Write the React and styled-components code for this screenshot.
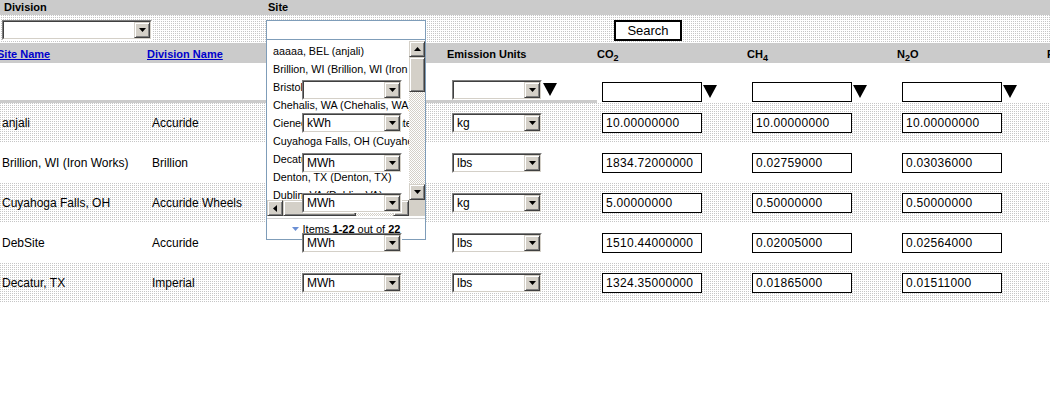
import React from 'react'
import styled, { createGlobalStyle, css } from 'styled-components'

const GlobalStyle = createGlobalStyle`
  html, body {
    margin: 0;
    padding: 0;
    background: #fff;
  }
  body {
    font-family: "Liberation Sans", Arial, sans-serif;
    font-size: 12px;
    color: #000;
    overflow: hidden;
  }
`

const dither = css`
  background-color: #fff;
  background-image: conic-gradient(#c6c6c6 0 25%, #fff 0);
  background-size: 2px 2px;
`

const checker = css`
  background-color: #fff;
  background-image: conic-gradient(#d4d0c8 0 25%, #fff 0 50%, #d4d0c8 0 75%, #fff 0);
  background-size: 2px 2px;
`

const raised = css`
  box-sizing: border-box;
  background-color: #d4d0c8;
  border: 1px solid;
  border-color: #d4d0c8 #404040 #404040 #d4d0c8;
  box-shadow: inset 1px 1px #fff, inset -1px -1px #808080;
`

const Page = styled.div`
  width: 1050px;
  height: 400px;
  overflow: hidden;
  background: #fff;
`

const LabelBar = styled.div`
  display: grid;
  grid-template-columns: 266px 348px 1fr;
  height: 15px;
  background: #cbcbcb;
  font-size: 11px;
  font-weight: bold;
  line-height: 15px;
`

const Label = styled.div`
  padding-left: ${p => p.$indent}px;
`

const ControlBar = styled.div`
  display: grid;
  grid-template-columns: 266px 348px 1fr;
  align-items: start;
  height: 28px;
  padding-top: 5px;
  box-sizing: border-box;
  ${dither}
`

const Slot = styled.div`
  padding-left: ${p => p.$indent || 0}px;
`

const ComboOuter = styled.div`
  position: relative;
  z-index: 3;
  width: ${p => p.$w}px;
  height: 20px;
  box-sizing: border-box;
  border: 1px solid;
  border-color: #808080 #fff #fff #808080;
`

const ComboInner = styled.div`
  display: flex;
  height: 100%;
  box-sizing: border-box;
  border: 1px solid;
  border-color: #404040 #d4d0c8 #d4d0c8 #404040;
  background: #fff;
`

const ComboText = styled.span`
  flex: 1;
  padding-left: 3px;
  font-size: 12px;
  line-height: 16px;
  white-space: nowrap;
  overflow: hidden;
`

const ArrowButton = styled.span`
  ${raised}
  width: 16px;
  height: 16px;
  flex: none;
  display: flex;
  align-items: center;
  justify-content: center;
`

const SearchButton = styled.button`
  width: 68px;
  height: 21px;
  box-sizing: border-box;
  border: 2px solid #000;
  background: #fff;
  padding: 0;
  font-family: "Liberation Sans", Arial, sans-serif;
  font-size: 13px;
  line-height: 17px;
  color: #000;
`

const SiteField = styled.div`
  position: relative;
`

const SiteInput = styled.div`
  width: 160px;
  height: 20px;
  box-sizing: border-box;
  border: 1px solid #7f9db9;
  background: #fff;
`

const Popup = styled.div`
  position: absolute;
  top: 20px;
  left: 0;
  z-index: 2;
  width: 160px;
  height: 200px;
  box-sizing: border-box;
  border: 1px solid #7f9db9;
  border-top: none;
  background: #fff;
  display: flex;
  flex-direction: column;
`

const ListFrame = styled.div`
  display: grid;
  grid-template-columns: 1fr 16px;
  grid-template-rows: 160px 16px;
`

const ItemList = styled.div`
  overflow: hidden;
  padding-top: 2px;
`

const Item = styled.div`
  height: 18px;
  padding-left: 6px;
  font-size: 10.75px;
  line-height: 18px;
  white-space: nowrap;
`

const VScroll = styled.div`
  display: flex;
  flex-direction: column;
  margin-top: 1px;
`

const HScroll = styled.div`
  display: flex;
`

const ScrollButton = styled.span`
  ${raised}
  width: 16px;
  height: 16px;
  flex: none;
  display: flex;
  align-items: center;
  justify-content: center;
`

const Thumb = styled.span`
  ${raised}
  flex: none;
  ${p => (p.$vertical ? `height: ${p.$size}px;` : `width: ${p.$size}px;`)}
`

const Track = styled.span`
  flex: 1;
  ${checker}
`

const Corner = styled.span`
  background: #d4d0c8;
`

const PopupFooter = styled.div`
  flex: 1;
  margin-top: 2px;
  border-top: 1px solid #d0d0d0;
  display: flex;
  align-items: center;
  justify-content: center;
  gap: 4px;
  font-size: 11px;
`

const Table = styled.div`
  margin-left: -3px;
  width: 1200px;
`

const grid = css`
  display: grid;
  grid-template-columns: repeat(8, 150px);
`

const HeaderRow = styled.div`
  ${grid}
  height: 20px;
  background: #cbcbcb;
  font-size: 11px;
  font-weight: bold;
  line-height: 18px;
  padding-top: 2px;
  box-sizing: border-box;
  white-space: nowrap;
`

const HeadLink = styled.a`
  color: #0000cc;
  text-decoration: underline;
  cursor: pointer;
`

const FilterRow = styled.div`
  ${grid}
  height: 40px;
  background: #fff;
`

const FilterCell = styled.div`
  display: flex;
  align-items: flex-end;
  gap: 1px;
  padding-left: 5px;
  box-sizing: border-box;
  ${p =>
    p.$ruled
      ? 'border-bottom: 3px solid #cbcbcb;'
      : 'padding-bottom: 1px;'}
`

const DataRow = styled.div`
  ${grid}
  height: 40px;
  align-items: center;
  ${p => (p.$shaded ? dither : 'background: #fff;')}
`

const Cell = styled.div`
  padding-left: 5px;
  font-size: 12px;
  white-space: nowrap;
`

const GasInput = styled.div`
  width: 100px;
  height: 20px;
  box-sizing: border-box;
  border: 1px solid #000;
  background: #fff;
  padding-left: 3px;
  font-size: 12px;
  line-height: 18px;
  letter-spacing: 0.3px;
`

const SmallArrow = ({ dir = 'down' }) => {
  const pts = {
    down: '0,0 7,0 3.5,4',
    up: '0,4 7,4 3.5,0',
    left: '4,0 4,7 0,3.5'
  }[dir]
  const w = dir === 'left' ? 4 : 7
  const h = dir === 'left' ? 7 : 4
  return (
    <svg width={w} height={h} viewBox={`0 0 ${w} ${h}`}>
      <polygon points={pts} fill="#000" />
    </svg>
  )
}

const SortArrow = () => (
  <svg width="14" height="13" viewBox="0 0 14 13" style={{ marginBottom: 4 }}>
    <polygon points="0,0 14,0 7,13" fill="#000" />
  </svg>
)

const Combo = ({ width, value }) => (
  <ComboOuter $w={width}>
    <ComboInner>
      <ComboText>{value}</ComboText>
      <ArrowButton>
        <SmallArrow />
      </ArrowButton>
    </ComboInner>
  </ComboOuter>
)

const Gas = ({ base, sub, after }) => (
  <span>
    {base}
    <sub style={{ fontSize: 9, verticalAlign: -3 }}>{sub}</sub>
    {after}
  </span>
)

const sites = [
  'aaaaa, BEL (anjali)',
  'Brillion, WI (Brillion, WI (Iron Works))',
  'Bristol, IN (Bristol, IN)',
  'Chehalis, WA (Chehalis, WA)',
  'Cienega, CA (Cienega Center)',
  'Cuyahoga Falls, OH (Cuyahoga Falls, OH)',
  'Decatur, TX (Decatur, TX)',
  'Denton, TX (Denton, TX)',
  'Dublin, VA (Dublin, VA)'
]

const rows = [
  { site: 'anjali', division: 'Accuride', energy: 'kWh', emission: 'kg', co2: '10.00000000', ch4: '10.00000000', n2o: '10.00000000' },
  { site: 'Brillion, WI (Iron Works)', division: 'Brillion', energy: 'MWh', emission: 'lbs', co2: '1834.72000000', ch4: '0.02759000', n2o: '0.03036000' },
  { site: 'Cuyahoga Falls, OH', division: 'Accuride Wheels', energy: 'MWh', emission: 'kg', co2: '5.00000000', ch4: '0.50000000', n2o: '0.50000000' },
  { site: 'DebSite', division: 'Accuride', energy: 'MWh', emission: 'lbs', co2: '1510.44000000', ch4: '0.02005000', n2o: '0.02564000' },
  { site: 'Decatur, TX', division: 'Imperial', energy: 'MWh', emission: 'lbs', co2: '1324.35000000', ch4: '0.01865000', n2o: '0.01511000' }
]

export default function App() {
  return (
    <Page>
      <GlobalStyle />
      <LabelBar>
        <Label $indent={4}>Division</Label>
        <Label $indent={2}>Site</Label>
        <Label />
      </LabelBar>
      <ControlBar>
        <Slot $indent={2}>
          <Combo width={150} value="" />
        </Slot>
        <SiteField>
          <SiteInput />
          <Popup>
            <ListFrame>
              <ItemList>
                {sites.map(s => (
                  <Item key={s}>{s}</Item>
                ))}
              </ItemList>
              <VScroll>
                <ScrollButton>
                  <SmallArrow dir="up" />
                </ScrollButton>
                <Thumb $vertical $size={35} />
                <Track />
                <ScrollButton>
                  <SmallArrow />
                </ScrollButton>
              </VScroll>
              <HScroll>
                <ScrollButton>
                  <SmallArrow dir="left" />
                </ScrollButton>
                <Thumb $size={73} />
                <Track />
                <ScrollButton />
              </HScroll>
              <Corner />
            </ListFrame>
            <PopupFooter>
              <svg width="7" height="4" viewBox="0 0 7 4">
                <polygon points="0,0 7,0 3.5,4" fill="#6b8fd4" />
              </svg>
              <span>
                Items <b>1-22</b> out of <b>22</b>
              </span>
            </PopupFooter>
          </Popup>
        </SiteField>
        <Slot>
          <SearchButton>Search</SearchButton>
        </Slot>
      </ControlBar>

      <Table>
        <HeaderRow>
          <div><HeadLink>Site Name</HeadLink></div>
          <div><HeadLink>Division Name</HeadLink></div>
          <div>Energy Units</div>
          <div>Emission Units</div>
          <div><Gas base="CO" sub="2" /></div>
          <div><Gas base="CH" sub="4" /></div>
          <div><Gas base="N" sub="2" after="O" /></div>
          <div>PFCs</div>
        </HeaderRow>
        <FilterRow>
          <FilterCell $ruled />
          <FilterCell $ruled />
          <FilterCell $ruled>
            <Combo width={100} value="" />
            <SortArrow />
          </FilterCell>
          <FilterCell $ruled>
            <Combo width={90} value="" />
            <SortArrow />
          </FilterCell>
          <FilterCell>
            <GasInput />
            <SortArrow />
          </FilterCell>
          <FilterCell>
            <GasInput />
            <SortArrow />
          </FilterCell>
          <FilterCell>
            <GasInput />
            <SortArrow />
          </FilterCell>
          <FilterCell />
        </FilterRow>
        {rows.map((r, i) => (
          <DataRow key={r.site} $shaded={i % 2 === 0}>
            <Cell>{r.site}</Cell>
            <Cell>{r.division}</Cell>
            <Cell>
              <Combo width={100} value={r.energy} />
            </Cell>
            <Cell>
              <Combo width={90} value={r.emission} />
            </Cell>
            <Cell>
              <GasInput>{r.co2}</GasInput>
            </Cell>
            <Cell>
              <GasInput>{r.ch4}</GasInput>
            </Cell>
            <Cell>
              <GasInput>{r.n2o}</GasInput>
            </Cell>
            <Cell />
          </DataRow>
        ))}
      </Table>
    </Page>
  )
}
